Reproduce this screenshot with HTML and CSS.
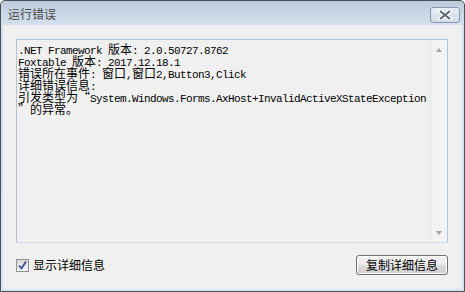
FILE: index.html
```html
<!DOCTYPE html>
<html>
<head>
<meta charset="utf-8">
<link rel="stylesheet" href="styles.css">
</head>
<body>
<div class="window">
  <div class="titlebar">
    <span class="title">运行错误</span>
    <div class="close">
      <svg width="14" height="10" viewBox="0 0 14 10"><path d="M2 1 L12 9 M12 1 L2 9" stroke="#ffffff" stroke-width="4" stroke-linecap="square"/><path d="M2 1 L12 9 M12 1 L2 9" stroke="#5a6470" stroke-width="2"/></svg>
    </div>
  </div>
  <div class="client">
    <div class="textbox">
      <div class="text">
        <div class="line">.NET Framework <span class="cjk">版本</span>: 2.0.50727.8762</div>
        <div class="line">Foxtable <span class="cjk">版本</span>: 2017.12.18.1</div>
        <div class="line"><span class="cjk">错误所在事件</span>: <span class="cjk">窗口</span>,<span class="cjk">窗口</span>2,Button3,Click</div>
        <div class="line"><span class="cjk">详细错误信息</span>:</div>
        <div class="line"><span class="cjk">引发类型为“</span>System.Windows.Forms.AxHost+InvalidActiveXStateException</div>
        <div class="line"><span class="cjk">”的异常。</span></div>
      </div>
      <div class="scrollbar">
        <span class="arrow up"></span>
        <span class="arrow down"></span>
      </div>
    </div>
    <div class="bottom">
      <label class="check">
        <span class="box">
          <svg width="11" height="11" viewBox="0 0 11 11"><path d="M2 5.5 L4.5 8.5 L9 1.5" fill="none" stroke="#3a4f9a" stroke-width="1.8"/></svg>
        </span>
        <span class="label">显示详细信息</span>
      </label>
      <button class="btn">复制详细信息</button>
    </div>
  </div>
</div>
</body>
</html>
```

FILE: styles.css
```css
html, body {
  margin: 0;
  padding: 0;
  background: #ffffff;
}
.window {
  width: 465px;
  height: 292px;
  box-sizing: border-box;
  border: 1px solid #4a4f56;
  border-radius: 5px 5px 0 0;
  background: linear-gradient(#bccbdc 0px, #c9d6e5 12px, #d4e0ee 24px, #d6e2ef 100%);
  padding: 0 2px 2px 2px;
  display: flex;
  flex-direction: column;
}
.titlebar {
  height: 24px;
  display: flex;
  align-items: center;
  justify-content: space-between;
  padding: 0 2px 0 5px;
}
.title {
  font-family: "Noto Sans CJK SC", sans-serif;
  font-size: 12px;
  color: #4a4a4a;
  line-height: 14px;
  margin-top: 2px;
}
.close {
  width: 28px;
  height: 14px;
  border: 1px solid #8797a9;
  border-radius: 3px;
  background: linear-gradient(#e6edf5, #d2dce8);
  display: flex;
  align-items: center;
  justify-content: center;
  margin-top: 4px;
}
.client {
  flex: 1;
  background: #f0f0f0;
  padding: 14px 14px 14px 13px;
  display: flex;
  flex-direction: column;
  gap: 12px;
}
.textbox {
  height: 204px;
  box-sizing: border-box;
  border: 1px solid #a8c8e8;
  border-left-color: #b4c4d8;
  border-bottom-color: #cddcec;
  display: flex;
  background: #f0f0f0;
}
.text {
  flex: 1;
  padding: 3px 0 0 1px;
  font-family: "Liberation Mono", monospace;
  font-size: 11px;
  letter-spacing: -0.6px;
  color: #000000;
}
.line {
  height: 12px;
  line-height: 12px;
  white-space: pre;
}
.cjk {
  font-family: "Noto Sans CJK SC", sans-serif;
  font-size: 12px;
  letter-spacing: 0;
}
.scrollbar {
  width: 17px;
  box-sizing: border-box;
  border-left: 1px solid #e6e6e6;
  background: #f3f3f3;
  display: flex;
  flex-direction: column;
  justify-content: space-between;
  align-items: center;
  padding: 8px 0 7px 0;
}
.arrow {
  width: 0;
  height: 0;
  border-left: 3.5px solid transparent;
  border-right: 3.5px solid transparent;
}
.arrow.up {
  border-bottom: 4px solid #a3a3a3;
}
.arrow.down {
  border-top: 4px solid #a3a3a3;
}
.bottom {
  height: 20px;
  display: flex;
  align-items: center;
  justify-content: space-between;
}
.check {
  display: flex;
  align-items: center;
  gap: 4px;
  padding-left: 0;
}
.box {
  width: 11px;
  height: 11px;
  border: 1px solid #8f8f8f;
  background: linear-gradient(#dcdcdc, #f4f4f4);
  display: flex;
  align-items: center;
  justify-content: center;
}
.label {
  font-family: "Noto Sans CJK SC", sans-serif;
  font-size: 12px;
  color: #000000;
  line-height: 14px;
}
.btn {
  width: 92px;
  height: 20px;
  box-sizing: border-box;
  border: 1px solid #707070;
  border-radius: 3px;
  background: linear-gradient(#f2f2f2 0%, #ebebeb 50%, #dddddd 51%, #cfcfcf 100%);
  font-family: "Noto Sans CJK SC", sans-serif;
  font-size: 12px;
  color: #000000;
  padding: 0;
  line-height: 16px;
  box-shadow: inset 0 0 0 1px #fcfcfc;
}
```
